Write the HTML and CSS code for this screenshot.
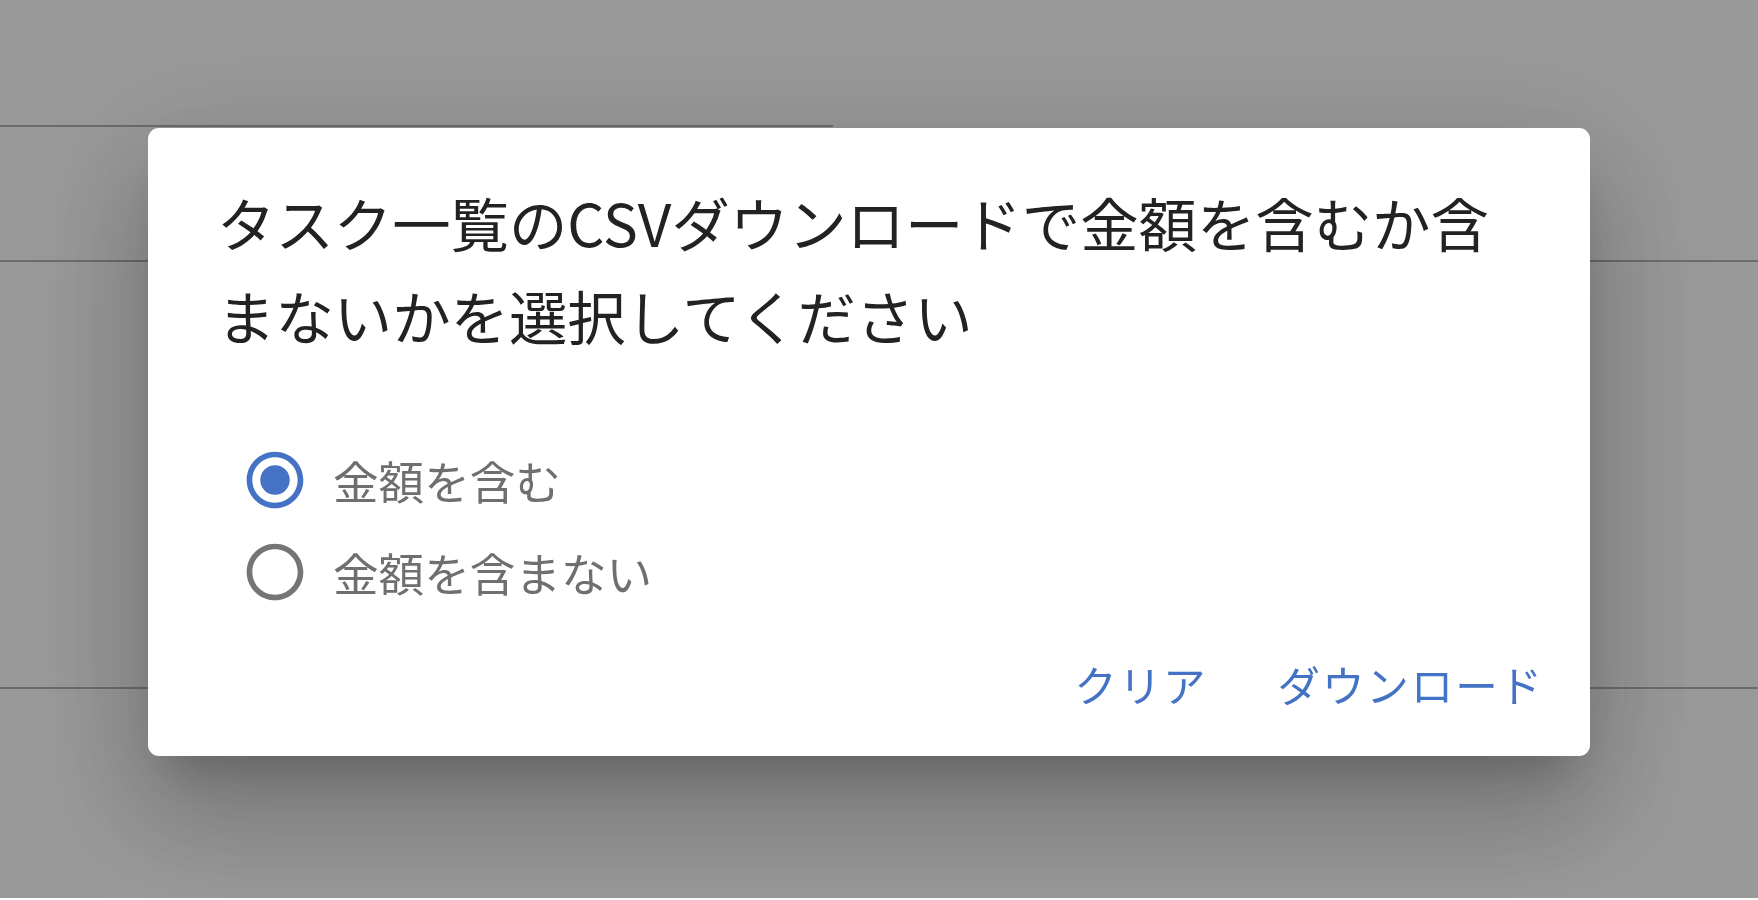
FILE: index.html
```html
<!DOCTYPE html>
<html lang="ja">
<head>
  <meta charset="UTF-8" />
  <meta name="viewport" content="width=device-width, initial-scale=1.0"/>
  <title>タスク一覧</title>
  <link rel="stylesheet" href="styles.css">
</head>
<body>
  <!-- 背景のページ -->
  <div class="page">
    <div class="tabs">
      <div class="tab-indicator"></div>
    </div>
    <div class="row row-head"></div>
    <div class="row row-body"></div>
  </div>

  <!-- ダイアログ -->
  <div class="backdrop">
    <div class="dialog" role="dialog">
      <h2 class="dialog-title">タスク一覧のCSVダウンロードで金額を含むか含まないかを選択してください</h2>

      <div class="dialog-content">
        <div class="options">
          <label class="option">
            <svg class="radio radio-checked" viewBox="0 0 24 24">
              <path d="M12 2C6.48 2 2 6.48 2 12s4.48 10 10 10 10-4.48 10-10S17.52 2 12 2zm0 18c-4.42 0-8-3.58-8-8s3.58-8 8-8 8 3.58 8 8-3.58 8-8 8z"/>
              <circle cx="12" cy="12" r="5.2"/>
            </svg>
            <span class="option-label">金額を含む</span>
          </label>
          <label class="option">
            <svg class="radio" viewBox="0 0 24 24">
              <path d="M12 2C6.48 2 2 6.48 2 12s4.48 10 10 10 10-4.48 10-10S17.52 2 12 2zm0 18c-4.42 0-8-3.58-8-8s3.58-8 8-8 8 3.58 8 8-3.58 8-8 8z"/>
            </svg>
            <span class="option-label">金額を含まない</span>
          </label>
        </div>
      </div>

      <div class="dialog-actions">
        <button class="text-button">クリア</button>
        <button class="text-button">ダウンロード</button>
      </div>
    </div>
  </div>
</body>
</html>
```

FILE: styles.css
```css
body {
  font-family: "Noto Sans CJK JP", "Noto Sans", sans-serif;
  margin: 0;
  padding: 0;
  background: #fff;
  overflow: hidden;
}
.page {
  height: 900px;
}
.tabs {
  height: 127px;
  display: flex;
  flex-direction: column;
  justify-content: flex-end;
}
.tab-indicator {
  width: 833px;
  height: 2px;
  background: #b4b4b4;
}
.row {
  border-bottom: 2px solid #b4b4b4;
}
.row-head { height: 133px; }
.row-body { height: 425px; }

.backdrop {
  position: fixed;
  top: 0;
  left: 0;
  right: 0;
  bottom: 2px;
  background: rgba(0, 0, 0, 0.4);
  padding: 128px 0 0 148px;
  box-sizing: border-box;
}
.dialog {
  width: 1442px;
  background: #fff;
  border-radius: 11px;
  box-shadow: 0 31px 43px -20px rgba(0, 0, 0, 0.2),
              0 68px 108px 9px rgba(0, 0, 0, 0.14),
              0 26px 131px 23px rgba(0, 0, 0, 0.12);
}
.dialog-title {
  margin: 0;
  padding: 47px 70px 0 69px;
  font-size: 58.4px;
  font-weight: 400;
  line-height: 1.6;
  color: #222;
}
.dialog-content {
  padding: 84px 72px 0;
}
.options {
  display: flex;
  flex-direction: column;
  gap: 24.5px;
}
.option {
  display: flex;
  align-items: center;
  height: 68px;
}
.radio {
  width: 68px;
  height: 68px;
  margin-left: 21px;
  margin-right: 24px;
  fill: #757575;
}
.radio-checked {
  fill: #4472c4;
}
.option-label {
  font-size: 45.6px;
  color: #6f6f6f;
}
.dialog-actions {
  display: flex;
  justify-content: flex-end;
  gap: 24px;
  padding: 28px 23px 24px;
}
.text-button {
  height: 98px;
  padding: 0 23px;
  border: none;
  background: none;
  font-family: inherit;
  font-size: 42.5px;
  letter-spacing: 0.045em;
  color: #4472c4;
  cursor: pointer;
}
```
